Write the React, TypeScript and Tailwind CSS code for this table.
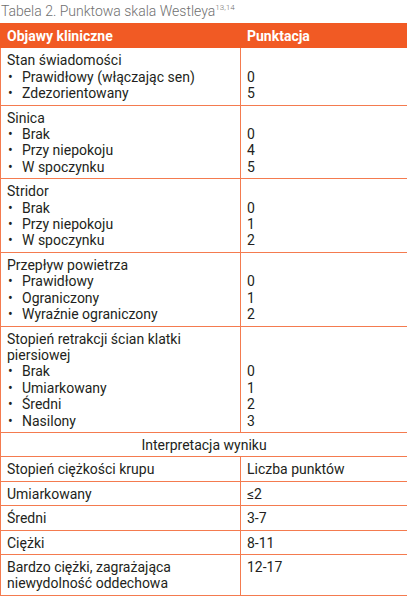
import React from "react";

const sections: { title: string[]; items: [string, string][] }[] = [
  {
    title: ["Stan świadomości"],
    items: [
      ["Prawidłowy (włączając sen)", "0"],
      ["Zdezorientowany", "5"],
    ],
  },
  {
    title: ["Sinica"],
    items: [
      ["Brak", "0"],
      ["Przy niepokoju", "4"],
      ["W spoczynku", "5"],
    ],
  },
  {
    title: ["Stridor"],
    items: [
      ["Brak", "0"],
      ["Przy niepokoju", "1"],
      ["W spoczynku", "2"],
    ],
  },
  {
    title: ["Przepływ powietrza"],
    items: [
      ["Prawidłowy", "0"],
      ["Ograniczony", "1"],
      ["Wyraźnie ograniczony", "2"],
    ],
  },
  {
    title: ["Stopień retrakcji ścian klatki", "piersiowej"],
    items: [
      ["Brak", "0"],
      ["Umiarkowany", "1"],
      ["Średni", "2"],
      ["Nasilony", "3"],
    ],
  },
];

const results: [string[], string][] = [
  [["Umiarkowany"], "≤2"],
  [["Średni"], "3-7"],
  [["Ciężki"], "8-11"],
  [["Bardzo ciężki, zagrażająca", "niewydolność oddechowa"], "12-17"],
];

const cell = "border border-[#f47b4f] px-[6px] pt-[4px] pb-[3px] align-top";

export default function App() {
  return (
    <div className="w-[407px] bg-white font-['Roboto',sans-serif] text-[14px] leading-[16.4px] text-[#231f20]">
      <div className="h-[23px] pl-[1px] pt-[2px] font-light text-[14px] leading-[18px] text-[#6f6f6f]">
        Tabela 2. Punktowa skala Westleya
        <sup className="relative -top-[6px] text-[8px]">13,14</sup>
      </div>
      <table className="w-[407px] table-fixed border-collapse">
        <colgroup>
          <col className="w-[240px]" />
          <col className="w-[167px]" />
        </colgroup>
        <thead>
          <tr className="bg-[#f15a24] text-white font-bold text-left">
            <th className="border border-[#f15a24] px-[6px] pt-[4px] pb-[3px] font-bold">
              Objawy kliniczne
            </th>
            <th className="border border-[#f15a24] px-[6px] pt-[4px] pb-[3px] font-bold">
              Punktacja
            </th>
          </tr>
        </thead>
        <tbody>
          {sections.map((s) => (
            <tr key={s.title[0]}>
              <td className={cell}>
                {s.title.map((t) => (
                  <div key={t}>{t}</div>
                ))}
                {s.items.map(([label]) => (
                  <div key={label} className="flex">
                    <span className="w-[15px] shrink-0 pl-[1px]">•</span>
                    <span>{label}</span>
                  </div>
                ))}
              </td>
              <td className={cell}>
                {s.title.map((t) => (
                  <div key={t}>&nbsp;</div>
                ))}
                {s.items.map(([label, pts]) => (
                  <div key={label}>{pts}</div>
                ))}
              </td>
            </tr>
          ))}
          <tr>
            <td colSpan={2} className={cell + " text-center"}>
              Interpretacja wyniku
            </td>
          </tr>
          <tr>
            <td className={cell}>Stopień ciężkości krupu</td>
            <td className={cell}>Liczba punktów</td>
          </tr>
          {results.map(([label, pts]) => (
            <tr key={pts}>
              <td className={cell}>
                {label.map((l) => (
                  <div key={l}>{l}</div>
                ))}
              </td>
              <td className={cell}>{pts}</td>
            </tr>
          ))}
        </tbody>
      </table>
    </div>
  );
}
